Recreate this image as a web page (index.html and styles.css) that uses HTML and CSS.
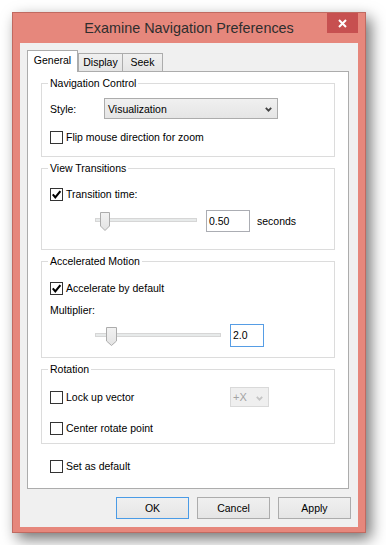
FILE: index.html
```html
<!DOCTYPE html>
<html>
<head>
<meta charset="utf-8">
<title>Examine Navigation Preferences</title>
<link rel="stylesheet" href="styles.css">
</head>
<body>
<div class="desk">
  <div class="window">
    <div class="titlebar">
      <span></span>
      <div class="title">Examine Navigation Preferences</div>
      <div class="close">
        <svg width="9" height="9" viewBox="0 0 9 9"><path d="M1 1 L8 8 M8 1 L1 8" stroke="#fff" stroke-width="2" fill="none"/></svg>
      </div>
    </div>
    <div class="client">
      <div class="tabs">
        <div class="tab active">General</div>
        <div class="tab t-display">Display</div>
        <div class="tab t-seek">Seek</div>
      </div>
      <div class="panel">
        <fieldset class="group g-nav">
          <legend>Navigation Control</legend>
          <div class="style-row">
            <span class="style-lbl">Style:</span>
            <div class="select">
              <span>Visualization</span>
              <svg class="chev" width="7" height="5" viewBox="0 0 7 5"><polyline points="0.8,0.8 3.5,3.6 6.2,0.8" fill="none" stroke="#444" stroke-width="1.8"/></svg>
            </div>
          </div>
          <div class="check r-flip"><span class="box"></span><span>Flip mouse direction for zoom</span></div>
        </fieldset>

        <fieldset class="group g-vt">
          <legend>View Transitions</legend>
          <div class="check"><span class="box"><svg width="11" height="11" viewBox="0 0 11 11"><path d="M1.8 5.4 L4.3 8.4 L9.4 2.2" fill="none" stroke="#000" stroke-width="2.1"/></svg></span><span>Transition time:</span></div>
          <div class="slider-row r-trans">
            <div class="slider s1">
              <div class="track"></div>
              <svg class="thumb" width="11" height="20" viewBox="0 0 11 20"><defs><linearGradient id="tg1" x1="0" y1="0" x2="0" y2="1"><stop offset="0" stop-color="#f2f2f2"/><stop offset="1" stop-color="#e3e3e3"/></linearGradient></defs><path d="M0.5 0.5 H9.5 V14 L5 18.5 L0.5 14 Z" fill="url(#tg1)" stroke="#acacac"/></svg>
            </div>
            <div class="input in1">0.50</div>
            <span class="unit">seconds</span>
          </div>
        </fieldset>

        <fieldset class="group g-am">
          <legend>Accelerated Motion</legend>
          <div class="check"><span class="box"><svg width="11" height="11" viewBox="0 0 11 11"><path d="M1.8 5.4 L4.3 8.4 L9.4 2.2" fill="none" stroke="#000" stroke-width="2.1"/></svg></span><span>Accelerate by default</span></div>
          <div class="plain r-mult">Multiplier:</div>
          <div class="slider-row r-mslide">
            <div class="slider s2">
              <div class="track"></div>
              <svg class="thumb" width="11" height="20" viewBox="0 0 11 20"><defs><linearGradient id="tg2" x1="0" y1="0" x2="0" y2="1"><stop offset="0" stop-color="#f2f2f2"/><stop offset="1" stop-color="#e3e3e3"/></linearGradient></defs><path d="M0.5 0.5 H10.5 V14 L5.5 18.5 L0.5 14 Z" fill="url(#tg2)" stroke="#acacac"/></svg>
            </div>
            <div class="input in2">2.0</div>
          </div>
        </fieldset>

        <fieldset class="group g-rot">
          <legend>Rotation</legend>
          <div class="lock-row">
            <div class="check lock-lbl"><span class="box"></span><span>Lock up vector</span></div>
            <div class="dd-off">
              <span>+X</span>
              <svg class="chev" width="7" height="5" viewBox="0 0 7 5"><polyline points="0.8,0.8 3.5,3.6 6.2,0.8" fill="none" stroke="#c4c4c4" stroke-width="1.8"/></svg>
            </div>
          </div>
          <div class="check r-center"><span class="box"></span><span>Center rotate point</span></div>
        </fieldset>

        <div class="check r-default"><span class="box"></span><span>Set as default</span></div>
      </div>
      <div class="buttons">
        <div class="btn ok">OK</div>
        <div class="btn">Cancel</div>
        <div class="btn">Apply</div>
      </div>
    </div>
  </div>
</div>
</body>
</html>
```

FILE: styles.css
```css
html, body {
  margin: 0;
  background: #ffffff;
}
body {
  font-family: "Liberation Sans", Arial, sans-serif;
  font-size: 10.5px;
  color: #000;
}
.desk {
  padding: 12px;
}
.window {
  width: 354px;
  height: 521px;
  box-sizing: border-box;
  border: 1px solid #c06a61;
  background: #e6877c;
  box-shadow: 5px 6px 14px rgba(0, 0, 0, 0.55);
  padding: 0 7px 5px 7px;
  display: flex;
  flex-direction: column;
}
.titlebar {
  height: 30px;
  flex: none;
  display: grid;
  grid-template-columns: 1fr auto 1fr;
}
.title {
  font-size: 14.4px;
  line-height: 30px;
  color: #2e2e2e;
  white-space: nowrap;
}
.close {
  justify-self: end;
  width: 31px;
  height: 20px;
  background: #c75050;
  display: flex;
  align-items: center;
  justify-content: center;
}
.client {
  height: 484px;
  flex: none;
  box-sizing: border-box;
  background: #f0f0f0;
  padding: 7px 9px 8px 7px;
  display: flex;
  flex-direction: column;
}
.tabs {
  display: flex;
  align-items: flex-end;
  height: 21px;
  flex: none;
}
.tab {
  box-sizing: border-box;
  height: 18px;
  line-height: 17px;
  text-align: center;
  border: 1px solid #acacac;
  border-bottom: none;
  background: linear-gradient(#f0f0f0, #e5e5e5);
}
.tab.active {
  width: 51px;
  height: 22px;
  line-height: 18px;
  margin-bottom: -1px;
  background: #ffffff;
  position: relative;
  z-index: 1;
}
.t-display {
  width: 45px;
}
.t-seek {
  width: 40px;
  border-left: none;
}
.panel {
  flex: 1;
  box-sizing: border-box;
  background: #ffffff;
  border: 1px solid #acacac;
  padding: 5px 13px 0 13px;
}
.group {
  margin: 0;
  border: 1px solid #dcdcdc;
  padding: 0 8px;
  min-width: 0;
}
.group legend {
  padding: 0 2px;
  margin-left: -2px;
  line-height: 13px;
  font-size: 10.5px;
}
.g-nav { padding-top: 8px; padding-bottom: 11px; }
.g-vt { margin-top: 5px; padding-top: 11px; padding-bottom: 17px; }
.g-am { margin-top: 5px; padding-top: 12px; padding-bottom: 10px; }
.g-rot { margin-top: 5px; padding-top: 11px; padding-bottom: 7px; }

.style-row {
  display: flex;
  align-items: center;
  height: 21px;
}
.style-lbl {
  width: 54px;
}
.select {
  width: 174px;
  height: 21px;
  box-sizing: border-box;
  border: 1px solid #acacac;
  background: linear-gradient(#f0f0f0, #e5e5e5);
  display: flex;
  align-items: center;
  justify-content: space-between;
  padding: 0 5px 0 3px;
}
.chev {
  display: block;
  margin-top: 2px;
}
.check {
  display: flex;
  align-items: center;
  height: 16px;
  gap: 3px;
  white-space: nowrap;
}
.box {
  width: 13px;
  height: 13px;
  box-sizing: border-box;
  border: 1px solid #333333;
  background: #ffffff;
  flex: none;
  display: flex;
  align-items: center;
  justify-content: center;
}
.box svg {
  display: block;
}
.r-flip { margin-top: 10px; }
.plain {
  height: 16px;
  line-height: 16px;
}
.slider-row {
  display: flex;
  align-items: center;
}
.r-trans { margin-top: 8px; height: 22px; }
.r-mult { margin-top: 6px; }
.r-mslide { margin-top: 6px; height: 23px; }
.slider {
  position: relative;
  height: 22px;
  margin-left: 45px;
  flex: none;
}
.s1 { width: 102px; }
.s2 { width: 126px; }
.track {
  margin-top: 8px;
  height: 4px;
  box-sizing: border-box;
  background: #e7eaea;
  border: 1px solid #d6d6d6;
}
.thumb {
  position: absolute;
  top: 2px;
  display: block;
}
.s1 .thumb { left: 5px; }
.s2 .thumb { left: 11px; }
.input {
  box-sizing: border-box;
  background: #ffffff;
  padding-left: 2px;
  margin-left: 9px;
  flex: none;
}
.in1 {
  width: 44px;
  height: 22px;
  line-height: 20px;
  border: 1px solid #abadb3;
}
.in2 {
  width: 34px;
  height: 23px;
  line-height: 21px;
  border: 1px solid #569de5;
}
.unit {
  margin-left: 7px;
}
.lock-row {
  display: flex;
  align-items: center;
  height: 20px;
}
.lock-lbl {
  width: 180px;
}
.dd-off {
  width: 39px;
  height: 20px;
  box-sizing: border-box;
  border: 1px solid #d9d9d9;
  background: #efefef;
  color: #a3a3a3;
  display: flex;
  align-items: center;
  justify-content: space-between;
  padding: 0 5px 0 2px;
  font-size: 11px;
}
.r-center { margin-top: 13px; }
.r-default {
  margin-top: 14px;
  margin-left: 9px;
}
.buttons {
  flex: none;
  display: flex;
  justify-content: flex-end;
  gap: 8px;
  margin-top: 8px;
  margin-right: -2px;
  height: 22px;
}
.btn {
  width: 73px;
  height: 22px;
  box-sizing: border-box;
  border: 1px solid #acacac;
  background: linear-gradient(#f0f0f0, #e5e5e5);
  text-align: center;
  line-height: 20px;
}
.btn.ok {
  border-color: #4a9be6;
}
```
